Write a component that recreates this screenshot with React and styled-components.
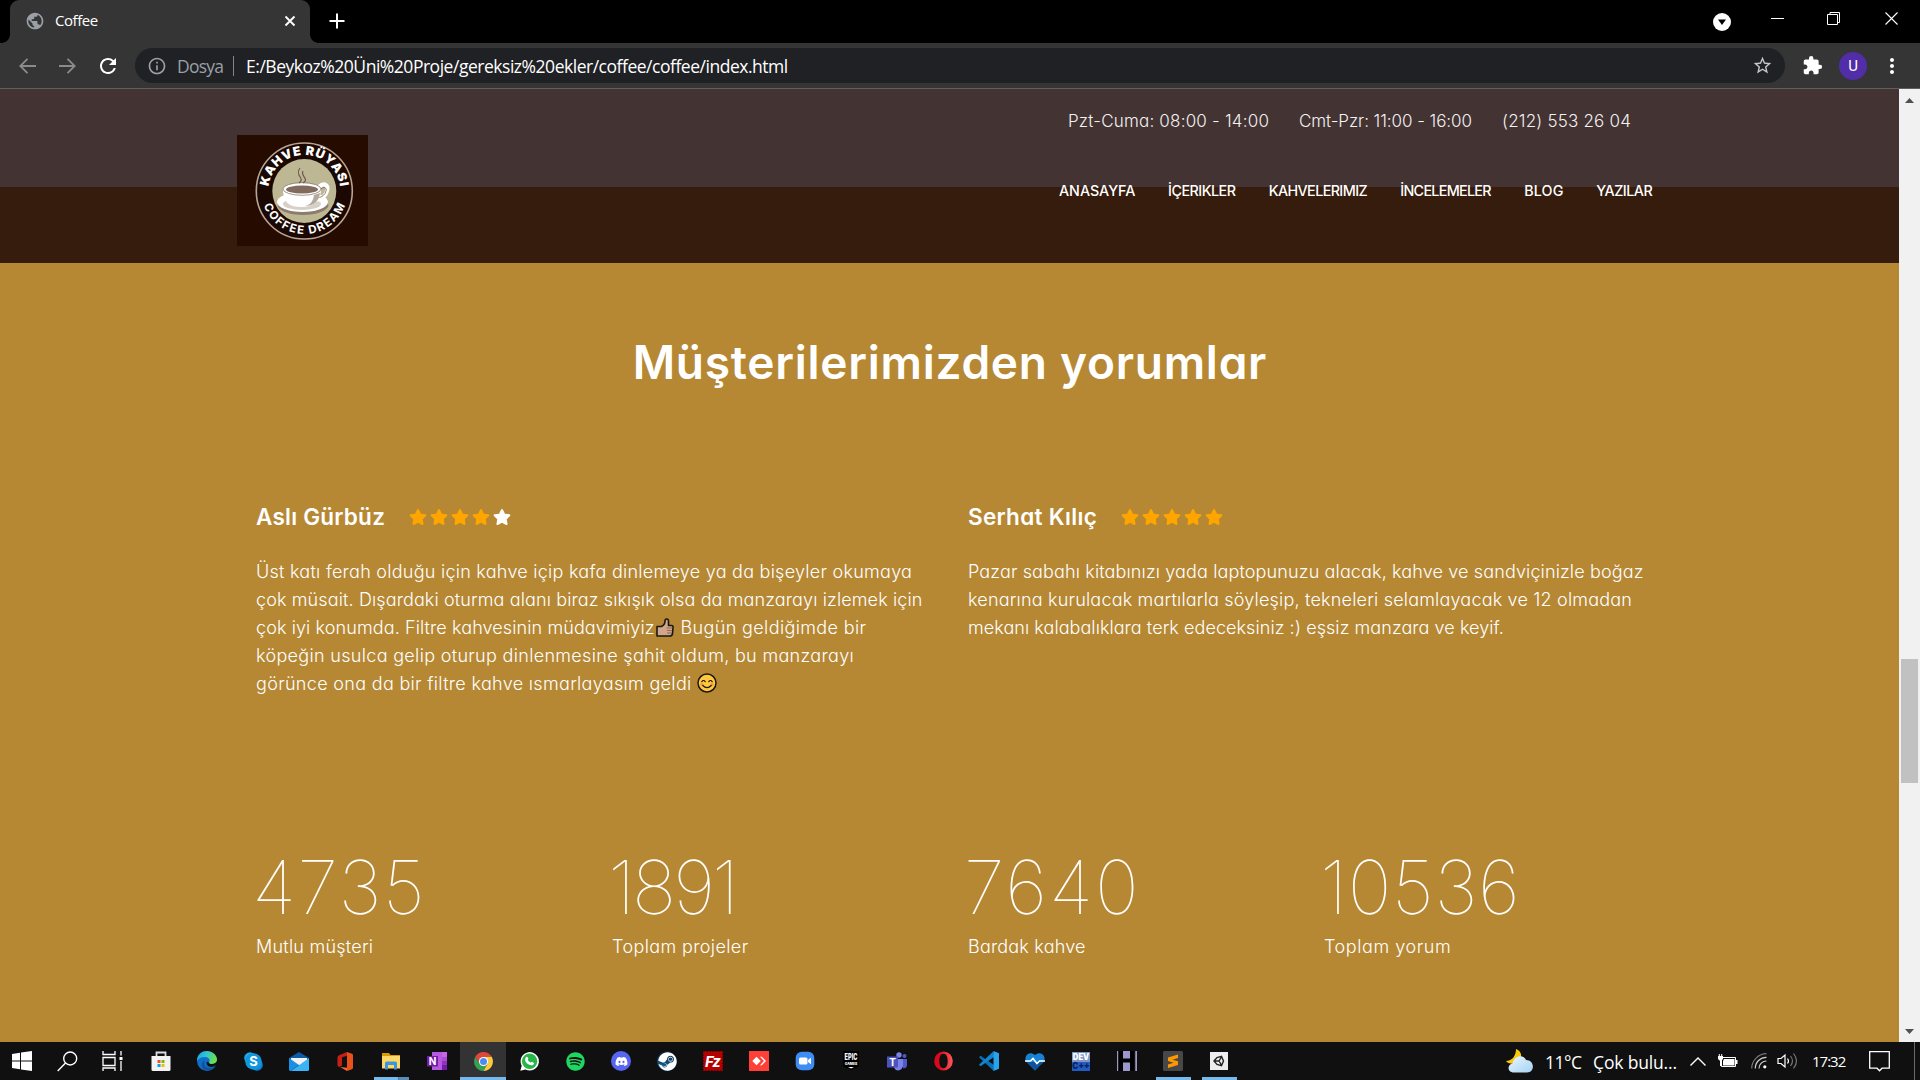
import React from "react";
import styled, { createGlobalStyle } from "styled-components";
import { MdPublic, MdRefresh, MdStarBorder, MdExtension, MdInfoOutline, MdMoreVert } from "react-icons/md";
import { FaStar, FaSpotify, FaDiscord, FaSteam } from "react-icons/fa";

const Global = createGlobalStyle`
  body { margin: 0; background: #000; overflow: hidden; }
  * { box-sizing: border-box; }
  svg { display: block; flex: none; overflow: visible; }
`;

const Page = styled.div`
  width: 1920px;
  height: 1080px;
  display: flex;
  flex-direction: column;
  font-family: Inter, "Open Sans", sans-serif;
  color: #fff;
`;

const Text = styled.span`
  white-space: pre;
  letter-spacing: ${p => p.$ls || 0}px;
  margin-right: ${p => -(p.$ls || 0)}px;
`;

/* ---------- browser ---------- */
const TabStrip = styled.div`
  height: 43px;
  background: #000;
  display: flex;
  padding-left: 2px;
  font-family: "Open Sans", sans-serif;
`;
const TabFoot = styled.div`
  width: 8px;
  align-self: flex-end;
  height: 8px;
  background: radial-gradient(circle at ${p => (p.$right ? "100%" : "0")} 0, #000 7.5px, #353535 8px);
`;
const Tab = styled.div`
  width: 300px;
  background: #353535;
  border-radius: 9px 9px 0 0;
  display: flex;
  align-items: center;
  padding: 0 14px 2px 15px;
  font-size: 15px;
  line-height: 20px;
`;
const TabTitle = styled.div`
  padding-bottom: 2px;
`;
const TabIcon = styled(MdPublic)`
  color: #9aa0a6;
  width: 20px;
  height: 20px;
  margin-right: 10px;
`;
const TabClose = styled.svg`
  margin-left: auto;
`;
const NewTab = styled.svg`
  margin: 13px 0 0 11px;
`;
const WindowControls = styled.div`
  margin-left: auto;
  padding: 12px 21px 0 0;
  display: flex;
  align-items: flex-start;
`;
const DropDown = styled.svg`
  margin-top: 1px;
`;
const Minimise = styled.svg`
  margin-left: 40px;
`;
const Restore = styled.svg`
  margin-left: 43px;
`;
const Close = styled.svg`
  margin-left: 45px;
`;
const Toolbar = styled.div`
  height: 46px;
  flex: none;
  background: #353535;
  border-bottom: 1px solid #5f5f5f;
  display: flex;
  align-items: center;
  padding-left: 19px;
  font-family: "Open Sans", sans-serif;
`;
const Arrow = styled.svg`
  margin-right: 23px;
`;
const Reload = styled(MdRefresh)`
  width: 24px;
  height: 24px;
  margin: 0 15px 0 -3px;
`;
const AddressBar = styled.div`
  width: 1650px;
  height: 35px;
  border-radius: 18px;
  background: #202124;
  display: flex;
  align-items: center;
  padding: 0 12px 0 12px;
  font-size: 17.5px;
  line-height: 24px;
`;
const Scheme = styled.div`
  color: #9aa0a6;
  padding-right: 9px;
  margin: 0 12px 0 10px;
  border-right: 1px solid #80868b;
  line-height: 20px;
  display: flex;
`;
const Bookmark = styled(MdStarBorder)`
  margin-left: auto;
  width: 21px;
  height: 21px;
  color: #c5c7ca;
`;
const Extension = styled(MdExtension)`
  width: 21px;
  height: 21px;
  margin-left: 17px;
`;
const Avatar = styled.div`
  width: 28px;
  height: 28px;
  border-radius: 50%;
  background: #512da8;
  display: grid;
  place-items: center;
  font: 400 15px Roboto, sans-serif;
  margin: 0 13px 0 16px;
`;

/* ---------- web page ---------- */
const Viewport = styled.div`
  display: flex;
  height: 953px;
  flex: none;
`;
const Site = styled.main`
  width: 1899px;
  background: #b68834;
  font-feature-settings: "cv11";
`;
const Header = styled.header`
  height: 174px;
  background: linear-gradient(#433333 98px, #351c0d 98px);
  display: flex;
  padding-left: 237px;
`;
const Logo = styled.svg`
  margin-top: 46px;
`;
const HeaderRight = styled.div`
  margin-left: 691px;
  padding-top: 18px;
`;
const Contacts = styled.div`
  display: flex;
  gap: 30px;
  padding-left: 9px;
  font-size: 17px;
  font-weight: 300;
  line-height: 28px;
  color: #f4f1f1;
`;
const Nav = styled.nav`
  display: flex;
  gap: 32.7px;
  margin-top: 46px;
  font-size: 14.3px;
  font-weight: 500;
  line-height: 20px;
`;
const Heading = styled.h1`
  margin: 69px 0 109px;
  text-align: center;
  font-size: 46px;
  font-weight: 600;
  line-height: 60px;
`;
const Columns = styled.div`
  display: grid;
  grid-template-columns: repeat(${p => p.$n}, ${p => 1424 / p.$n}px);
  padding-left: 256px;
`;
const Reviews = styled(Columns)`
  height: 196px;
`;
const ReviewHead = styled.div`
  display: flex;
  align-items: center;
  height: 32px;
  margin-bottom: 25px;
  font-size: 22.5px;
  font-weight: 600;
  line-height: 32px;
`;
const Author = styled.div`
  width: 153px;
`;
const Stars = styled.div`
  display: flex;
  gap: 3px;
`;
const Star = styled(FaStar)`
  width: 18px;
  height: 16px;
  color: ${p => (p.$on === "yes" ? "#ffa500" : "#fff")};
`;
const ReviewLine = styled.div`
  height: 28px;
  display: flex;
  align-items: center;
  font-size: 18px;
  font-weight: 300;
  line-height: 28px;
`;
const Emoji = styled.svg`
  margin: 0 ${p => p.$after || 0}px 2px ${p => p.$before}px;
`;
const Stats = styled(Columns)`
  margin-top: 150px;
`;
const Figure = styled.div`
  font-size: 74px;
  font-weight: 100;
  line-height: 80px;
  margin: 0 0 6px -4px;
`;
const Caption = styled.div`
  font-size: 18px;
  font-weight: 300;
  line-height: 28px;
`;
const Scrollbar = styled.div`
  width: 21px;
  background: #f1f1f1;
  display: flex;
  flex-direction: column;
  align-items: center;
  padding: 9px 0 8px;
`;
const Thumb = styled.div`
  width: 17px;
  height: 124px;
  margin: 556px 0 auto;
  background: #c1c1c1;
`;

/* ---------- taskbar ---------- */
const Taskbar = styled.footer`
  height: 38px;
  flex: none;
  background: #101010;
  display: flex;
  font-family: "Open Sans", sans-serif;
`;
const Task = styled.div`
  width: ${p => p.$w || 46}px;
  margin-right: ${p => p.$gap || 0}px;
  height: 38px;
  display: flex;
  align-items: center;
  justify-content: center;
  background: ${p => (p.$active ? "#333" : "transparent")};
  background-image: ${p => (p.$line ? `linear-gradient(${p.$line})` : "none")};
  background-size: ${p => (p.$active ? 46 : 35)}px 3px;
  background-position: center bottom;
  background-repeat: no-repeat;
`;
const Tray = styled.div`
  margin-left: auto;
  display: flex;
  align-items: center;
  font-size: 17.5px;
  line-height: 24px;
`;
const Weather = styled.div`
  display: flex;
  gap: 11px;
  margin: 2px 13px 0 11px;
`;
const TrayIcon = styled.svg`
  margin-left: ${p => p.$gap || 0}px;
`;
const Clock = styled.div`
  font-size: 15px;
  width: 35px;
  margin: 0 22px 0 14px;
`;
const DesktopEdge = styled.div`
  width: 6px;
  height: 38px;
  border-left: 1px solid #6a6a6a;
  margin-left: 24px;
`;
const Glyph = styled.g`
  font-family: Inter, sans-serif;
  text-anchor: middle;
  fill: #fff;
`;

const LogoArt = () => (
  <Logo width="131" height="111" viewBox="0 0 131 111">
    <defs>
      <path id="logo-top" d="M31.3 56a36 36 0 0 1 72 0" />
      <path id="logo-bottom" d="M24.3 56a43 43 0 0 0 86 0" />
    </defs>
    <rect width="131" height="111" fill="#260b01" />
    <circle cx="67.3" cy="56" r="48" fill="#1b0803" stroke="#b9a593" strokeWidth="1.6" />
    <circle cx="67.3" cy="56" r="32" fill="#bdb794" />
    <Glyph>
      <text fontSize="12.5" fontWeight="900">
        <textPath href="#logo-top" startOffset="50%" textLength="104">KAHVE RÜYASI</textPath>
      </text>
      <text fontSize="11.5" fontWeight="700">
        <textPath href="#logo-bottom" startOffset="50%" textLength="106">COFFEE DREAM</textPath>
      </text>
    </Glyph>
    <ellipse cx="66" cy="70" rx="25.5" ry="10" fill="#8d7c6c" />
    <ellipse cx="65.5" cy="67" rx="25.5" ry="10" fill="#fff" />
    <ellipse cx="65" cy="69" rx="19" ry="6" fill="#d6d0c8" />
    <path d="M82 52c5-5 10-2 8 4-1 5-6 8-12 9" fill="none" stroke="#fff" strokeWidth="4" />
    <path d="M84 54c3-3 6-1 5 2-1 4-4 6-8 7" fill="none" stroke="#7a6558" strokeWidth=".8" />
    <path d="M46 54c0 14 7 18 18 18s20-5 20-18z" fill="#fff" />
    <path d="M77 60c-1 7-4 10-9 11 8 0 14-4 15-13z" fill="#b5a89b" />
    <ellipse cx="65" cy="54" rx="19" ry="6.3" fill="#fff" stroke="#78665a" strokeWidth=".7" />
    <ellipse cx="65" cy="54.5" rx="16" ry="4" fill="#806b5e" />
    <path d="M62 48c7-5-5-7 1-15M66 48c7-4-3-7 0-12" fill="none" stroke="#6c5b4d" strokeWidth="1.2" />
  </Logo>
);

const ThumbsUp = () => (
  <Emoji $before={2} $after={6} width="18" height="19" viewBox="0 0 18 19">
    <path d="M1 8.500h4.500c2-1 3.500-3 3.500-5.500 0-3 3.500-2.500 3.500 0v4.500h3c1.500 0 1.800 1 1.500 2l-.5 6c-.3 1.700-1 2.500-2.500 2.500H1z" fill="#d1a68a" stroke="#1b1713" strokeWidth="1.6" strokeLinejoin="round" />
    <path d="M10.500 10h5.500M11 12.500h5M11 15h4.500" stroke="#7d5c49" strokeWidth=".8" />
  </Emoji>
);

const Smile = () => (
  <Emoji $before={6} width="20" height="20" viewBox="0 0 20 20">
    <circle cx="10" cy="10" r="9" fill="#ffc83d" stroke="#1b1713" strokeWidth="1.5" />
    <circle cx="5" cy="11.5" r="1.7" fill="#f79a45" />
    <circle cx="15" cy="11.5" r="1.7" fill="#f79a45" />
    <path d="M4.800 8.700q1.700-2.400 3.400 0M11.800 8.700q1.700-2.400 3.400 0M5.800 12.500q4.200 4.300 8.400 0" fill="none" stroke="#1b1713" strokeWidth="1.2" strokeLinecap="round" />
  </Emoji>
);

const reviews = [
  {
    name: "Aslı Gürbüz", ls: 0.24, stars: 4,
    lines: [
      [["Üst katı ferah olduğu için kahve içip kafa dinlemeye ya da bişeyler okumaya", 0.26]],
      [["çok müsait. Dışardaki oturma alanı biraz sıkışık olsa da manzarayı izlemek için", 0.12]],
      [["çok iyi konumda. Filtre kahvesinin müdavimiyiz", 0.1], ThumbsUp, ["Bugün geldiğimde bir", 0.37]],
      [["köpeğin usulca gelip oturup dinlenmesine şahit oldum, bu manzarayı", 0.32]],
      [["görünce ona da bir filtre kahve ısmarlayasım geldi", 0.32], Smile],
    ],
  },
  {
    name: "Serhat Kılıç", ls: 0.3, stars: 5,
    lines: [
      [["Pazar sabahı kitabınızı yada laptopunuzu alacak, kahve ve sandviçinizle boğaz", 0.13]],
      [["kenarına kurulacak martılarla söyleşip, tekneleri selamlayacak ve 12 olmadan", 0.19]],
      [["mekanı kalabalıklara terk edeceksiniz :) eşsiz manzara ve keyif.", 0.06]],
    ],
  },
];
const contacts = [["Pzt-Cuma: 08:00 - 14:00", 0.2], ["Cmt-Pzr: 11:00 - 16:00", -0.06], ["(212) 553 26 04", 0.2]];
const links = [["ANASAYFA", -0.02], ["İÇERIKLER", -0.5], ["KAHVELERIMIZ", -0.58], ["İNCELEMELER", -0.7], ["BLOG", 0.2], ["YAZILAR", -0.5]];
const stats = [
  ["4735", 1.6, "Mutlu müşteri", 0.24],
  ["1891", -3.1, "Toplam projeler", 0.38],
  ["7640", 2.0, "Bardak kahve", 0.2],
  ["10536", 0.6, "Toplam yorum", 0.57],
];

const SearchIcon = () => <svg width="21" height="21" fill="none" stroke="#fff" strokeWidth="1.4"><circle cx="13.2" cy="7.5" r="6.5" /><path d="M8.500 12L.7 20" /></svg>;
const TaskViewIcon = () => (
  <svg width="22" height="20" fill="none" stroke="#fff" strokeWidth="1.3">
    <path d="M1 0v3.500h12V0M1 6.500h12v8H1zM1 20v-3h12v3M19 0v4.500M19 10v10" /><path d="M17.500 6h3v3h-3z" fill="#fff" stroke="none" />
  </svg>
);
const WindowsIcon = () => <svg width="20" height="20" fill="#fff"><path d="M0 3l8-1.200V9.500H0zM9 1.600L20 0v9.500H9zM0 10.500h8v7.700L0 17zM9 10.500h11V20L9 18.400z" /></svg>;
const StoreIcon = () => (
  <svg width="20" height="20">
    <path d="M5.500 6V1.500h9V6" fill="none" stroke="#ddd" strokeWidth="1.8" /><path d="M.5 5h19v13.500q0 1.500-1.500 1.500H2Q.5 20 .5 18.500z" fill="#f3f3f3" />
    <path d="M6.500 9h3v3h-3z" fill="#f25022" /><path d="M10.500 9h3v3h-3z" fill="#7fba00" /><path d="M6.500 13h3v3h-3z" fill="#00a4ef" /><path d="M10.500 13h3v3h-3z" fill="#ffb900" />
  </svg>
);
const EdgeIcon = () => (
  <svg width="20" height="20">
    <defs><linearGradient id="edge" x1="0" x2="1" y2=".3"><stop stopColor="#1d9fe0" /><stop offset=".5" stopColor="#31c4d4" /><stop offset="1" stopColor="#6ae04a" /></linearGradient></defs>
    <circle cx="10" cy="10" r="10" fill="#0c70c8" />
    <path d="M0 10C0 3 5 0 10 0s10 4 10 8.500c0 3-2.500 4.500-5 4.500-2 0-3.500-.7-3-1.500 2-3-.5-5.500-4-5.500C4 6 1 8 0 10z" fill="url(#edge)" />
    <path d="M8 9.500c-3 6 3 9 9.500 6.500C15 20 8 21 5.500 17 3.500 13.500 5 10.500 8 9.500z" fill="#1252a0" />
    <path d="M12 11.500c-.5.800 1 1.500 3 1.500 2.300 0 4.200-1 5-3v4l-3 1.500c-5 1.500-8.500-1.500-7-5z" fill="#101010" />
  </svg>
);
const SkypeIcon = () => (
  <svg width="19" height="19">
    <circle cx="6" cy="6" r="5.8" fill="#1ba9e8" /><circle cx="13" cy="13" r="5.8" fill="#0c84d6" /><circle cx="9.5" cy="9.5" r="8.3" fill="#0f97e0" />
    <Glyph><text x="9.5" y="14.2" fontSize="13" fontWeight="700">S</text></Glyph>
  </svg>
);
const MailIcon = () => <svg width="20" height="19"><path d="M0 6l10-6 10 6v6H0z" fill="#0d5aa7" /><path d="M2 6h16v7H2z" fill="#f3f3f3" /><path d="M0 6l10 7-8 6H1.500Q0 19 0 17.500z" fill="#1a8fe3" /><path d="M20 6L2 19h16.500q1.500 0 1.500-1.500z" fill="#3bb4f5" /></svg>;
const OfficeIcon = () => <svg width="16" height="19"><path d="M10 0l5 1.800q1 .4 1 1.400v12.600q0 1-1 1.400L10 19z" fill="#e8501c" /><path d="M10 0v3.700L5 5.300v8.200L2 15q-1.500-.5-1.500-2V5.500Q.5 4 2 3.300z" fill="#c52016" /><path d="M3 15l7 .7V19z" fill="#ee6a30" /></svg>;
const ExplorerIcon = () => <svg width="19" height="17"><path d="M0 0h7l1.500 2H18v4H0z" fill="#d99a00" /><path d="M0 3h18v12.500H0z" fill="#ffd768" /><path d="M3 16.500V10q0-1.500 1.500-1.500h9Q15 8.500 15 10v6.500h-3V12H6v4.500z" fill="#3a96dd" /></svg>;
const OneNoteIcon = () => <svg width="20" height="18"><path d="M5 0h10v18H5z" fill="#b45be0" /><path d="M15 0h5v5h-5z" fill="#ca64ea" /><path d="M15 5h5v4h-5z" fill="#ae4bd5" /><path d="M15 9h5v4h-5z" fill="#9332bf" /><path d="M15 13h5v5h-5z" fill="#7719aa" /><path d="M0 4h11v10.500H0z" fill="#7719aa" /><Glyph><text x="5.5" y="13" fontSize="10" fontWeight="700">N</text></Glyph></svg>;
const ChromeIcon = () => (
  <svg width="19" height="19" viewBox="-9.5 -9.5 19 19">
    <path d="M-8.200-4.700A9.500 9.500 0 0 1 8.200-4.700L0-4.500-4 2.300z" fill="#e0473a" /><path d="M-8.200-4.700A9.500 9.500 0 0 0 0 9.500L4 2.300-4 2.300z" fill="#34a252" /><path d="M8.200-4.700A9.500 9.500 0 0 1 0 9.500L4 2.300 0-4.500z" fill="#fbca3e" />
    <circle r="4.6" fill="#fff" /><circle r="3.5" fill="#4a8af4" />
  </svg>
);
const WhatsIcon = () => <svg width="19" height="19"><path d="M.3 18.700l1.400-5A9.200 9.200 0 1 1 5.500 17.400z" fill="#fff" /><circle cx="9.6" cy="9.3" r="7.7" fill="#28b54a" /><path d="M6 5.200c1-1 1.600-.3 2.300 1.400.2.500-.7 1-.5 1.500.6 1 1.500 1.900 2.800 2.500.6.200 1-.9 1.500-.7 2 .9 2.200 1.100 1.800 2.200-.8 1.600-3 1.600-5 .5C6 11 3.800 8 6 5.200z" fill="#fff" /></svg>;
const SpotifyIcon = styled(FaSpotify)`
  width: 19px;
  height: 19px;
  color: #1ed760;
`;
const Round = styled.div`
  width: 20px;
  height: 20px;
  border-radius: 50%;
  background: ${p => p.$bg};
  display: grid;
  place-items: center;
  svg { width: ${p => p.$size}px; height: ${p => p.$size}px; }
`;
const FzIcon = () => <svg width="20" height="20"><path d="M0 0h20v20H0z" fill="#b30000" /><path d="M.5.500h19v19H.5z" fill="none" stroke="#5e0000" strokeDasharray="1.5 1.5" /><Glyph><text x="9.5" y="15.500" fontSize="15" fontWeight="700" fontStyle="italic" letterSpacing="-1">Fz</text></Glyph></svg>;
const AnyDeskIcon = () => <svg width="20" height="20"><path d="M0 0h20v20H0z" fill="#ff4038" /><path d="M7.500 5.800l4.200 4.200-4.200 4.200L3.300 10zM11 5.800h1.800L17 10l-4.200 4.200H11L15 10z" fill="#fff" /></svg>;
const ZoomIcon = () => <svg width="20" height="20"><rect x=".7" y=".7" width="18.6" height="18.6" rx="6" fill="#3f8cf5" /><rect x="4" y="6.5" width="8.5" height="7" rx="1.5" fill="#fff" /><path d="M13 9l3-2.300v6.600L13 11z" fill="#fff" /></svg>;
const EpicIcon = () => (
  <svg width="18" height="20">
    <path d="M1 0h16v15.500L9 19 1 15.500z" fill="#000" />
    <Glyph transform="translate(9 0) scale(.66 1)" fontWeight="800"><text y="9.5" fontSize="8.5">EPIC</text></Glyph>
    <Glyph transform="translate(9 0) scale(.85 1)" fontWeight="800"><text y="14.2" fontSize="4">GAMES</text></Glyph>
    <path d="M6 16h6l-3 1.500z" fill="#fff" />
  </svg>
);
const TeamsIcon = () => <svg width="20" height="19"><circle cx="12" cy="3" r="2.7" fill="#7b83eb" /><circle cx="17.5" cy="4" r="2" fill="#5059c9" /><path d="M13 7h7v6q0 3-3.500 3.500z" fill="#5059c9" /><path d="M7 7h9v7q-1 4-5 4.500-3-.5-4-3z" fill="#7b83eb" /><path d="M0 4.500h11v11H0z" fill="#4b53bc" /><Glyph><text x="5.5" y="13.5" fontSize="10" fontWeight="700">T</text></Glyph></svg>;
const OperaIcon = () => <svg width="19" height="20"><defs><linearGradient id="opera"><stop offset=".3" stopColor="#d9091b" /><stop offset="1" stopColor="#ff5a5a" /></linearGradient></defs><path fillRule="evenodd" d="M9.500.5a9.300 9.500 0 1 1 0 19 9.300 9.500 0 0 1 0-19zm0 2.300c-3 0-4.200 3.500-4.200 7.200s1.200 7.200 4.200 7.200 4.200-3.500 4.200-7.200-1.200-7.200-4.200-7.200z" fill="url(#opera)" /></svg>;
const CodeIcon = () => <svg width="20" height="20"><path d="M1.500 4.800L0 6.200l14.500 13.500L15 14z" fill="#0b71b8" /><path d="M1.500 15.200L0 13.800 14.500.3 15 6z" fill="#0f86d2" /><path d="M14.500 0L20 2.200v15.600L14.500 20z" fill="#2aa3ee" /></svg>;
const HealthIcon = () => <svg width="20" height="19"><path d="M10 18.500L1.500 10C-2 5.500 3.500-2 10 3c6.500-5 12 2.500 8.500 7z" fill="#1682d6" /><path d="M1.500 10h17L10 18.500z" fill="#0c559c" /><path d="M0 9h5.500L8 6.500l4 5L14.500 9H20" fill="none" stroke="#fff" strokeWidth="1.6" /></svg>;
const DevIcon = () => (
  <svg width="20" height="19">
    <path d="M1 0h18v19H1z" fill="#235bc4" /><path d="M1 0h18v10H1z" fill="#7f96c5" />
    <Glyph transform="translate(10 0) scale(.9 1)" fontWeight="900"><text y="8.5" fontSize="8.5">DEV</text></Glyph>
    <Glyph transform="translate(10 0) scale(.9 1)" fontWeight="900"><text y="17.5" fontSize="9" style={{ fill: "#0a2358" }}>C++</text></Glyph>
  </svg>
);
const HIcon = () => <svg width="20" height="20"><path d="M0 0h20v20H0z" fill="#9d98cc" /><path d="M2 0h4v7.500h7V0h5v20h-5v-8.500H6V20H2z" fill="#000" /><path d="M1 0h1v20H1zM17.500 0h.8v20h-.8z" fill="#222" /></svg>;
const SublimeIcon = () => <svg width="20" height="20"><rect width="20" height="20" rx="1.5" fill="#474747" /><path d="M5 6.500L15 3.500V7L9.500 8.700 15 10.200V14L5 17v-3.500l5.500-1.700L5 10z" fill="#ff9800" /></svg>;
const UnityIcon = () => <svg width="18" height="18"><path d="M0 0h18v18H0z" fill="#eee" /><path d="M4 9l3-3.500 4.500-1.200L13.500 9l-2 4.700L7 12.500zM4 9h5M9 9l2.800-4.500M9 9l2.800 4.500" fill="none" stroke="#222" strokeWidth="1.4" /></svg>;

const blue = "#76b9ed, #76b9ed";
const tasks = [
  [StoreIcon], [EdgeIcon], [SkypeIcon], [MailIcon], [OfficeIcon],
  [ExplorerIcon, "90deg, #76b9ed 24px, #3f6a8c 24px, #5a8db8 25px"],
  [OneNoteIcon], [ChromeIcon, blue, true], [WhatsIcon], [SpotifyIcon],
  [() => <Round $bg="#5865f2" $size={13}><FaDiscord /></Round>],
  [() => <Round $bg="linear-gradient(#111d3b, #136fa5)" $size={19}><FaSteam /></Round>],
  [FzIcon], [AnyDeskIcon], [ZoomIcon], [EpicIcon], [TeamsIcon], [OperaIcon], [CodeIcon], [HealthIcon], [DevIcon], [HIcon],
  [SublimeIcon, blue], [UnityIcon, blue],
];

const WeatherIcon = () => (
  <svg width="28" height="24">
    <path d="M10 0c6 2 7 9 2 13-4 3-10 2-12-1 6 0 10-5 10-12z" fill="#ffc70a" />
    <defs><linearGradient id="cloud" x1="0" y1="0" x2="1" y2="1"><stop stopColor="#e9f6ff" /><stop offset="1" stopColor="#a5d3f3" /></linearGradient></defs>
    <path d="M8 23.500c-7 0-7-8-1.500-9C8 6 18 5 20 11c9 0 9 12.500 1 12.500z" fill="url(#cloud)" />
  </svg>
);

const TrayIcons = () => (
  <>
    <TrayIcon width="16" height="9" fill="none" stroke="#fff" strokeWidth="1.4"><path d="M.5 8.500L8 1l7.500 7.500" /></TrayIcon>
    <TrayIcon $gap={12} width="20" height="14"><path d="M3.500 3.500h14v9h-14z" fill="none" stroke="#fff" /><path d="M6 5h10.500v6.500H5V7zM18 6h1.500v4H18zM0 2h5v3L3.500 6.500h-2L0 5zM.8 0h1v2h-1zM3.200 0h1v2h-1zM2 6h1v6H2z" fill="#fff" /></TrayIcon>
    <TrayIcon $gap={13} width="16" height="16" fill="none" strokeWidth="1.2"><path d="M.7 15.500A15 15 0 0 1 15.500.7" stroke="#777" /><path d="M4.300 15.500A11 11 0 0 1 15.500 4.300M8 15.500A7.500 7.500 0 0 1 15.500 8" stroke="#fff" opacity=".8" /><circle cx="13.8" cy="13.8" r="1.6" fill="#fff" /></TrayIcon>
    <TrayIcon $gap={10} width="21" height="18" fill="none" strokeWidth="1.2"><path d="M1 6.500h3L8 3v12l-4-3.500H1z" stroke="#fff" /><path d="M10.500 6.500q2 2.500 0 5" stroke="#fff" /><path d="M13.500 4q4 5 0 10M16.500 1.500q6 7.500 0 15" stroke="#777" /></TrayIcon>
  </>
);

export default function App() {
  return (
    <Page>
      <Global />
      <TabStrip>
        <TabFoot />
        <Tab>
          <TabIcon />
          <TabTitle><Text $ls={-0.45}>Coffee</Text></TabTitle>
          <TabClose width="12" height="12" stroke="#fff" strokeWidth="1.9"><path d="M1.500 1.500l9 9M10.500 1.500l-9 9" /></TabClose>
        </Tab>
        <TabFoot $right />
        <NewTab width="16" height="16" stroke="#fff" strokeWidth="2"><path d="M8 .5v15M.5 8h15" /></NewTab>
        <WindowControls>
          <DropDown width="18" height="18"><circle cx="9" cy="9" r="9" fill="#fff" /><path d="M5 6.500h8L9 12z" fill="#000" /></DropDown>
          <Minimise width="13" height="14" stroke="#fff"><path d="M0 6.500h13" /></Minimise>
          <Restore width="13" height="14" fill="none" stroke="#fff"><path d="M.5 2.500h10v10H.5zM3 2V.5h9.500v10H11" /></Restore>
          <Close width="14" height="14" stroke="#fff" strokeWidth="1.1"><path d="M.5.500l12 12M12.500.500l-12 12" /></Close>
        </WindowControls>
      </TabStrip>
      <Toolbar>
        <Arrow width="17" height="16" fill="none" stroke="#8b8b8b" strokeWidth="1.8"><path d="M17 8H1.500M8.500.8L1.300 8l7.200 7.200" /></Arrow>
        <Arrow width="17" height="16" fill="none" stroke="#8b8b8b" strokeWidth="1.8"><path d="M0 8h15.500M8.500.8L15.700 8l-7.200 7.200" /></Arrow>
        <Reload />
        <AddressBar>
          <MdInfoOutline size={20} color="#9aa0a6" />
          <Scheme><Text $ls={-0.76}>Dosya</Text></Scheme>
          <Text $ls={-0.475}>E:/Beykoz%20Üni%20Proje/gereksiz%20ekler/coffee/coffee/index.html</Text>
          <Bookmark />
        </AddressBar>
        <Extension />
        <Avatar>U</Avatar>
        <MdMoreVert size={24} />
      </Toolbar>

      <Viewport>
        <Site>
          <Header>
            <LogoArt />
            <HeaderRight>
              <Contacts>{contacts.map(([t, ls]) => <Text key={t} $ls={ls}>{t}</Text>)}</Contacts>
              <Nav>{links.map(([t, ls]) => <Text key={t} $ls={ls}>{t}</Text>)}</Nav>
            </HeaderRight>
          </Header>
          <Heading><Text $ls={0.75}>Müşterilerimizden yorumlar</Text></Heading>
          <Reviews $n={2}>
            {reviews.map(r => (
              <section key={r.name}>
                <ReviewHead>
                  <Author><Text $ls={r.ls}>{r.name}</Text></Author>
                  <Stars>{[0, 1, 2, 3, 4].map(i => <Star key={i} $on={i < r.stars ? "yes" : "no"} />)}</Stars>
                </ReviewHead>
                {r.lines.map((line, i) => (
                  <ReviewLine key={i}>
                    {line.map((Part, j) => (Array.isArray(Part) ? <Text key={j} $ls={Part[1]}>{Part[0]}</Text> : <Part key={j} />))}
                  </ReviewLine>
                ))}
              </section>
            ))}
          </Reviews>
          <Stats $n={4}>
            {stats.map(([n, ls, label, labelLs]) => (
              <div key={n}>
                <Figure><Text $ls={ls}>{n}</Text></Figure>
                <Caption><Text $ls={labelLs}>{label}</Text></Caption>
              </div>
            ))}
          </Stats>
        </Site>
        <Scrollbar>
          <svg width="9" height="5"><path d="M0 5L4.500 0 9 5z" fill="#505050" /></svg>
          <Thumb />
          <svg width="9" height="5"><path d="M0 0h9L4.500 5z" fill="#505050" /></svg>
        </Scrollbar>
      </Viewport>

      <Taskbar>
        <Task $w={44}><WindowsIcon /></Task>
        <Task $w={46}><SearchIcon /></Task>
        <Task $w={45} $gap={3}><TaskViewIcon /></Task>
        {tasks.map(([Icon, line, active], i) => <Task key={i} $line={line} $active={active}><Icon /></Task>)}
        <Tray>
          <WeatherIcon />
          <Weather><Text $ls={-0.5}>11°C</Text><Text $ls={-0.17}>Çok bulu...</Text></Weather>
          <TrayIcons />
          <Clock><Text $ls={-1}>17:32</Text></Clock>
          <svg width="21" height="21" fill="none" stroke="#fff" strokeWidth="1.3"><path d="M.7.700h19.600v16.500H13l-2.500 2.600L8 17.200H.7z" /></svg>
          <DesktopEdge />
        </Tray>
      </Taskbar>
    </Page>
  );
}
